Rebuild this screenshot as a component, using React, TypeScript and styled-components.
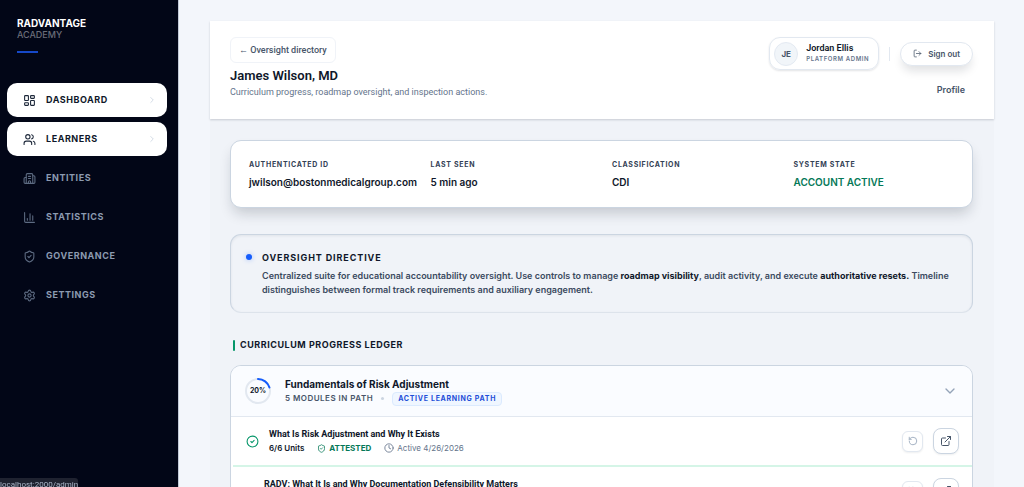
import React from "react";
import styled, { createGlobalStyle, css } from "styled-components";
import {
  LayoutDashboard,
  Users,
  Building2,
  ChartColumn,
  ShieldCheck,
  Settings,
  ChevronRight,
  ChevronDown,
  LogOut,
  CircleCheck,
  Clock,
  RotateCcw,
  ExternalLink,
} from "lucide-react";

const compactFont = `Roboto, "Liberation Sans", sans-serif`;

const GlobalStyle = createGlobalStyle`
  *, *::before, *::after { box-sizing: border-box; }
  html { scrollbar-width: none; }
  html::-webkit-scrollbar { display: none; }
  body {
    margin: 0;
    background: #f3f6fb;
    color: #0f172a;
    font-family: Inter, "Liberation Sans", sans-serif;
    font-size: 9px;
    line-height: 14px;
  }
  button { font-family: inherit; cursor: pointer; }
  h1, h2, h3, p, dl, dd, ul { margin: 0; padding: 0; }
`;

const Shell = styled.div`
  display: flex;
  align-items: flex-start;
`;

const Sidebar = styled.aside`
  position: sticky;
  top: 0;
  flex: 0 0 179px;
  height: 100vh;
  padding: 17px 11px 17px 7px;
  background: #020617;
  border-right: 1px solid #c3cad8;
`;

const Brand = styled.div`
  padding: 0 10px;
  font-size: 10px;
  font-weight: 700;
  line-height: 12px;
  color: #fff;
`;

const BrandSub = styled.div`
  font-size: 9px;
  font-weight: 500;
  line-height: 11px;
  color: #6a6d79;
`;

const BrandRule = styled.div`
  width: 21px;
  height: 2px;
  margin-top: 11px;
  background: #1648c8;
`;

const Nav = styled.nav`
  display: flex;
  flex-direction: column;
  gap: 5px;
  margin-top: 30px;
`;

const NavLink = styled.a<{ $active?: boolean }>`
  display: flex;
  align-items: center;
  gap: 10px;
  height: 34px;
  padding: 0 10px 0 16px;
  border-radius: 10px;
  font-size: 9px;
  font-weight: 700;
  letter-spacing: 0.06em;
  text-transform: uppercase;
  text-decoration: none;
  color: #8c9ab0;
  svg { flex: none; color: #5d6b82; }
  ${(p) =>
    p.$active &&
    css`
      background: #fff;
      color: #0f172a;
      svg { color: #1e293b; }
      svg:last-child { margin-left: auto; color: #cbd5e1; }
    `}
`;

const Main = styled.main`
  flex: 1;
  min-width: 0;
  padding: 21px 30px 0 31px;
`;

const Panel = styled.div`
  background: #f0f3f8;
`;

const Header = styled.header`
  display: flex;
  justify-content: space-between;
  align-items: flex-start;
  height: 98px;
  padding: 16px 21px 16px 20px;
  background: #fff;
  box-shadow: 0 1px 2px rgba(15, 23, 42, 0.18);
`;

const BackButton = styled.button`
  display: block;
  height: 26px;
  padding: 0 8px;
  border: 1px solid #f0f3f8;
  border-radius: 6px;
  background: #fff;
  font-family: ${compactFont};
  font-size: 9px;
  font-weight: 500;
  color: #475569;
`;

const Title = styled.h1`
  margin-top: 4px;
  font-family: ${compactFont};
  font-size: 13px;
  font-weight: 600;
  line-height: 18px;
`;

const Subtitle = styled.p`
  font-family: ${compactFont};
  font-size: 9px;
  color: #64748b;
`;

const Account = styled.div`
  display: flex;
  flex-direction: column;
  align-items: flex-end;
`;

const AccountRow = styled.div`
  display: flex;
  align-items: center;
  gap: 10px;
`;

const UserCard = styled.div`
  display: flex;
  align-items: center;
  gap: 8px;
  height: 33px;
  padding: 0 9px 0 4px;
  border: 1px solid #e2e8f0;
  border-radius: 11px;
  box-shadow: 0 1px 2px rgba(15, 23, 42, 0.12);
`;

const Avatar = styled.div`
  display: flex;
  align-items: center;
  justify-content: center;
  width: 24px;
  height: 24px;
  border: 1px solid #e4eaf2;
  border-radius: 50%;
  background: #f1f5f9;
  font-size: 8px;
  font-weight: 700;
  color: #475569;
`;

const UserName = styled.div`
  font-family: ${compactFont};
  font-size: 9px;
  font-weight: 600;
  line-height: 11px;
`;

const UserRole = styled.div`
  font-size: 6px;
  font-weight: 600;
  line-height: 10px;
  letter-spacing: 0.1em;
  text-transform: uppercase;
  color: #64748b;
`;

const Divider = styled.div`
  width: 1px;
  height: 14px;
  background: #e2e8f0;
`;

const SignOut = styled.button`
  display: flex;
  align-items: center;
  gap: 6px;
  height: 24px;
  padding: 0 12px;
  border: 1px solid #e2e8f0;
  border-radius: 12px;
  background: #fff;
  box-shadow: 0 7px 10px -2px rgba(15, 23, 42, 0.13);
  font-size: 8px;
  font-weight: 600;
  color: #475569;
`;

const ProfileLink = styled.a`
  margin: 13px 8px 0 0;
  font-size: 9px;
  font-weight: 600;
  text-decoration: none;
  color: #475569;
`;

const Content = styled.div`
  display: flex;
  flex-direction: column;
  padding: 21px 21px 0 20px;
`;

const Facts = styled.dl`
  display: grid;
  grid-template-columns: repeat(4, minmax(0, 1fr));
  gap: 21px;
  padding: 17px 18px;
  border: 1px solid #cbd5e1;
  border-radius: 11px;
  background: #fff;
  box-shadow: 0 8px 14px -3px rgba(15, 23, 42, 0.2);
  white-space: nowrap;
`;

const FactLabel = styled.dt`
  font-size: 7px;
  font-weight: 700;
  line-height: 13px;
  letter-spacing: 0.1em;
  text-transform: uppercase;
  color: #334155;
`;

const FactValue = styled.dd<{ $positive?: boolean }>`
  margin-top: 4px;
  font-size: 10px;
  font-weight: 600;
  line-height: 15px;
  color: ${(p) => (p.$positive ? "#047857" : "#0f172a")};
`;

const Directive = styled.section`
  display: flex;
  gap: 10px;
  margin-top: 26px;
  padding: 15px;
  border: 1px solid #cbd5e1;
  border-bottom-color: #dde3eb;
  border-radius: 11px;
  box-shadow: inset 0 1px 3px rgba(15, 23, 42, 0.07);
`;

const Dot = styled.span`
  flex: none;
  width: 6px;
  height: 6px;
  margin-top: 4px;
  border-radius: 50%;
  background: #155dfc;
  box-shadow: 0 0 5px rgba(21, 93, 252, 0.35);
`;

const DirectiveTitle = styled.h2`
  font-size: 9px;
  font-weight: 700;
  line-height: 16px;
  letter-spacing: 0.1em;
  text-transform: uppercase;
`;

const DirectiveText = styled.p`
  margin-top: 3px;
  font-size: 9px;
  font-weight: 600;
  line-height: 14px;
  color: #3b4a60;
  strong { font-weight: 700; color: #0f172a; }
`;

const SectionTitle = styled.h2`
  display: flex;
  align-items: center;
  gap: 5px;
  margin: 25px 0 13px 3px;
  font-size: 9px;
  font-weight: 700;
  line-height: 14px;
  letter-spacing: 0.06em;
  text-transform: uppercase;
  &::before {
    content: "";
    width: 2px;
    height: 11px;
    border-radius: 1px;
    background: #059669;
  }
`;

const Ledger = styled.section`
  border: 1px solid #cbd5e1;
  border-radius: 11px;
  background: #fff;
  overflow: hidden;
`;

const PathHeader = styled.div`
  display: flex;
  align-items: center;
  gap: 14px;
  height: 51px;
  padding: 0 14px;
  border-bottom: 1px solid #e2e8f0;
  background: #fafcff;
`;

const Ring = styled.div`
  position: relative;
  flex: none;
  width: 26px;
  height: 26px;
  svg { display: block; }
`;

const RingLabel = styled.span`
  position: absolute;
  inset: 0;
  display: flex;
  align-items: center;
  justify-content: center;
  font-size: 7px;
  font-weight: 700;
`;

const PathName = styled.h3`
  font-size: 10px;
  font-weight: 700;
  line-height: 14px;
`;

const PathMeta = styled.div`
  display: flex;
  align-items: center;
  gap: 8px;
  margin-top: 1px;
  font-size: 8px;
  font-weight: 600;
  line-height: 13px;
  letter-spacing: 0.06em;
  text-transform: uppercase;
  color: #475569;
`;

const Bullet = styled.span`
  width: 3px;
  height: 3px;
  border-radius: 50%;
  background: #cbd5e1;
`;

const PathTag = styled.span`
  padding: 0 5px;
  border: 1px solid #dbeafe;
  border-radius: 4px;
  background: #eff6ff;
  font-size: 7px;
  font-weight: 700;
  line-height: 12px;
  letter-spacing: 0.1em;
  color: #1d4ed8;
`;

const Toggle = styled.button`
  display: flex;
  margin-left: auto;
  padding: 0;
  border: 0;
  background: none;
  color: #94a3b8;
`;

const Modules = styled.ul`
  margin-left: 2px;
  list-style: none;
`;

const Module = styled.li<{ $done?: boolean }>`
  display: flex;
  align-items: center;
  gap: 10px;
  height: ${(p) => (p.$done ? 50 : 49)}px;
  padding: 0 13px;
  border-bottom: ${(p) => (p.$done ? "2px solid #d5f5e7" : "1px solid #e2e8f0")};
`;

const StatusSlot = styled.span<{ $done?: boolean }>`
  flex: none;
  display: flex;
  width: ${(p) => (p.$done ? 13 : 8)}px;
  color: #059669;
`;

const ModuleBody = styled.div`
  flex: 1;
  min-width: 0;
  min-height: 28px;
`;

const ModuleName = styled.h3`
  font-family: ${compactFont};
  font-size: 9px;
  font-weight: 700;
  line-height: 14px;
`;

const ModuleMeta = styled.div`
  display: flex;
  align-items: center;
  gap: 13px;
  font-size: 8px;
  font-weight: 600;
  line-height: 14px;
`;

const MetaItem = styled.span<{ $tone?: "good" | "muted" }>`
  display: flex;
  align-items: center;
  gap: 3px;
  ${(p) => p.$tone === "good" && css`color: #047857; font-weight: 700;`}
  ${(p) => p.$tone === "muted" && css`color: #64748b; font-weight: 400;`}
`;

const IconButton = styled.button<{ $large?: boolean }>`
  display: flex;
  align-items: center;
  justify-content: center;
  flex: none;
  width: ${(p) => (p.$large ? 26 : 21)}px;
  height: ${(p) => (p.$large ? 26 : 21)}px;
  padding: 0;
  border: 1px solid ${(p) => (p.$large ? "#cbd5e1" : "#e2e8f0")};
  border-radius: ${(p) => (p.$large ? 8 : 6)}px;
  background: #fff;
  color: ${(p) => (p.$large ? "#475569" : "#94a3b8")};
  box-shadow: 0 1px 2px rgba(15, 23, 42, 0.07);
`;

const StatusBar = styled.div`
  position: fixed;
  left: 0;
  bottom: 0;
  width: 78px;
  height: 9px;
  overflow: hidden;
  border-top-right-radius: 3px;
  background: #1f2230;
  font-family: ${compactFont};
  font-size: 8px;
  line-height: 14px;
  color: #a9b4c6;
  white-space: nowrap;
`;

const navItems = [
  { label: "Dashboard", Icon: LayoutDashboard, active: true },
  { label: "Learners", Icon: Users, active: true },
  { label: "Entities", Icon: Building2 },
  { label: "Statistics", Icon: ChartColumn },
  { label: "Governance", Icon: ShieldCheck },
  { label: "Settings", Icon: Settings },
];

const facts = [
  { label: "Authenticated ID", value: "jwilson@bostonmedicalgroup.com" },
  { label: "Last seen", value: "5 min ago" },
  { label: "Classification", value: "CDI" },
  { label: "System state", value: "ACCOUNT ACTIVE", positive: true },
];

const modules = [
  {
    name: "What Is Risk Adjustment and Why It Exists",
    done: true,
    units: "6/6 Units",
    active: "Active 4/26/2026",
  },
  { name: "RADV: What It Is and Why Documentation Defensibility Matters" },
];

const RADIUS = 12;
const CIRCUMFERENCE = 2 * Math.PI * RADIUS;

function ProgressRing({ value }: { value: number }) {
  return (
    <Ring>
      <svg width="26" height="26" viewBox="0 0 26 26" fill="none" strokeWidth="2">
        <circle cx="13" cy="13" r={RADIUS} stroke="#e2e8f0" />
        <circle
          cx="13"
          cy="13"
          r={RADIUS}
          stroke="#155dfc"
          strokeLinecap="round"
          strokeDasharray={`${(CIRCUMFERENCE * value) / 100} ${CIRCUMFERENCE}`}
          transform="rotate(-90 13 13)"
        />
      </svg>
      <RingLabel>{value}%</RingLabel>
    </Ring>
  );
}

export default function App() {
  return (
    <>
      <GlobalStyle />
      <Shell>
        <Sidebar>
          <Brand>
            RADVANTAGE
            <BrandSub>ACADEMY</BrandSub>
            <BrandRule />
          </Brand>
          <Nav>
            {navItems.map(({ label, Icon, active }) => (
              <NavLink key={label} href="#" $active={active}>
                <Icon size={13} strokeWidth={2} />
                {label}
                {active && <ChevronRight size={10} />}
              </NavLink>
            ))}
          </Nav>
        </Sidebar>
        <Main>
          <Panel>
            <Header>
              <div>
                <BackButton type="button">← Oversight directory</BackButton>
                <Title>James Wilson, MD</Title>
                <Subtitle>
                  Curriculum progress, roadmap oversight, and inspection actions.
                </Subtitle>
              </div>
              <Account>
                <AccountRow>
                  <UserCard>
                    <Avatar>JE</Avatar>
                    <div>
                      <UserName>Jordan Ellis</UserName>
                      <UserRole>Platform admin</UserRole>
                    </div>
                  </UserCard>
                  <Divider />
                  <SignOut type="button">
                    <LogOut size={9} />
                    Sign out
                  </SignOut>
                </AccountRow>
                <ProfileLink href="#">Profile</ProfileLink>
              </Account>
            </Header>
            <Content>
              <Facts>
                {facts.map((f) => (
                  <div key={f.label}>
                    <FactLabel>{f.label}</FactLabel>
                    <FactValue $positive={f.positive}>{f.value}</FactValue>
                  </div>
                ))}
              </Facts>
              <Directive>
                <Dot />
                <div>
                  <DirectiveTitle>Oversight directive</DirectiveTitle>
                  <DirectiveText>
                    Centralized suite for educational accountability oversight. Use
                    controls to manage <strong>roadmap visibility</strong>, audit
                    activity, and execute <strong>authoritative resets.</strong>{" "}
                    Timeline distinguishes between formal track requirements and
                    auxiliary engagement.
                  </DirectiveText>
                </div>
              </Directive>
              <SectionTitle>Curriculum progress ledger</SectionTitle>
              <Ledger>
                <PathHeader>
                  <ProgressRing value={20} />
                  <div>
                    <PathName>Fundamentals of Risk Adjustment</PathName>
                    <PathMeta>
                      5 modules in path
                      <Bullet />
                      <PathTag>Active learning path</PathTag>
                    </PathMeta>
                  </div>
                  <Toggle type="button" aria-label="Collapse path">
                    <ChevronDown size={16} />
                  </Toggle>
                </PathHeader>
                <Modules>
                  {modules.map((m) => (
                    <Module key={m.name} $done={m.done}>
                      <StatusSlot $done={m.done}>
                        {m.done && <CircleCheck size={13} />}
                      </StatusSlot>
                      <ModuleBody>
                        <ModuleName>{m.name}</ModuleName>
                        {m.done && (
                          <ModuleMeta>
                            <MetaItem>{m.units}</MetaItem>
                            <MetaItem $tone="good">
                              <ShieldCheck size={9} />
                              ATTESTED
                            </MetaItem>
                            <MetaItem $tone="muted">
                              <Clock size={10} />
                              {m.active}
                            </MetaItem>
                          </ModuleMeta>
                        )}
                      </ModuleBody>
                      <IconButton type="button" aria-label="Reset module">
                        <RotateCcw size={10} />
                      </IconButton>
                      <IconButton $large type="button" aria-label="Open module">
                        <ExternalLink size={12} />
                      </IconButton>
                    </Module>
                  ))}
                </Modules>
              </Ledger>
            </Content>
          </Panel>
        </Main>
      </Shell>
      <StatusBar>localhost:2000/admin</StatusBar>
    </>
  );
}
